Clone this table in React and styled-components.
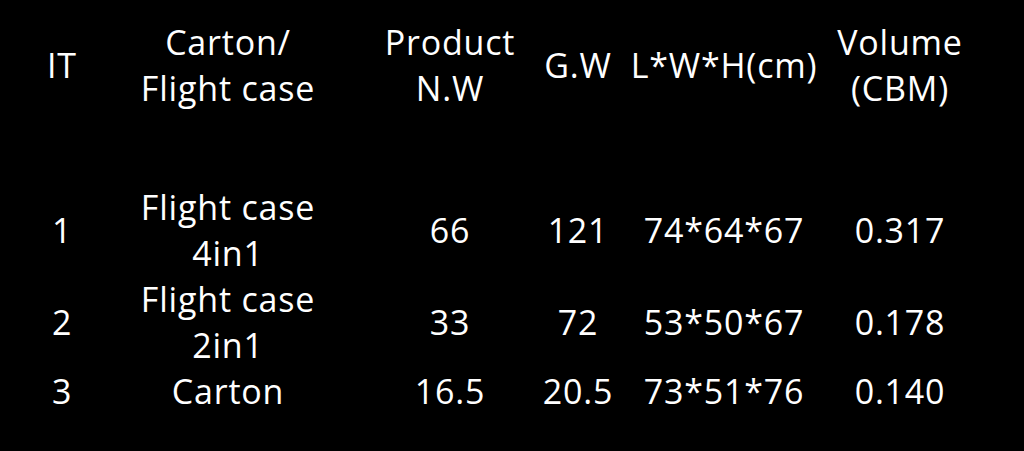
import styled, { createGlobalStyle } from "styled-components";

const GlobalStyle = createGlobalStyle`
  html, body {
    margin: 0;
    background: #000;
  }
`;

const columns = "64px 268px 176px 80px 212px 140px";

const headers = ["IT", "Carton/\nFlight case", "Product\nN.W", "G.W", "L*W*H(cm)", "Volume\n(CBM)"];

const rows = [
  ["1", "Flight case\n4in1", "66", "121", "74*64*67", "0.317"],
  ["2", "Flight case\n2in1", "33", "72", "53*50*67", "0.178"],
  ["3", "Carton", "16.5", "20.5", "73*51*76", "0.140"],
];

const App = () => {
  return (
    <Page>
      <GlobalStyle />
      <HeaderRow>
        {headers.map((h, i) => (
          <Cell key={i}>{h}</Cell>
        ))}
      </HeaderRow>
      <Body>
        {rows.map((r, i) => (
          <Row key={i}>
            {r.map((c, j) => (
              <Cell key={j}>{c}</Cell>
            ))}
          </Row>
        ))}
      </Body>
    </Page>
  );
};

const Page = styled.div`
  width: 1024px;
  height: 451px;
  box-sizing: border-box;
  padding: 19px 0 0 30px;
  background: #000;
  color: #fff;
  font-family: "Open Sans", "Noto Sans", sans-serif;
  font-size: 34px;
  line-height: 46px;
  letter-spacing: 0.8px;
  overflow: hidden;
`;

const HeaderRow = styled.div`
  display: grid;
  grid-template-columns: ${columns};
  align-items: center;
`;

const Body = styled.div`
  margin-top: 73px;
  display: flex;
  flex-direction: column;
`;

const Row = styled.div`
  display: grid;
  grid-template-columns: ${columns};
  align-items: center;
`;

const Cell = styled.div`
  text-align: center;
  white-space: pre;
  display: flex;
  justify-content: center;
`;

export default App;
